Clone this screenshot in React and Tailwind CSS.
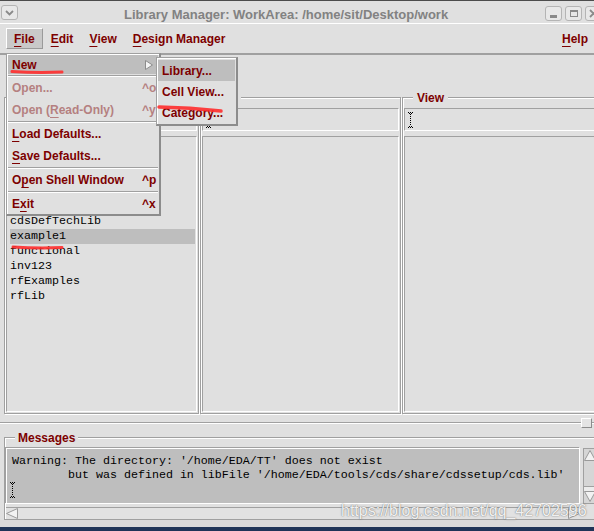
import React from 'react'

const LIBS = ['US_8ths', 'ahdlLib', 'analogLib', 'avTech', 'basic', 'cdsDefTechLib', 'example1', 'functional', 'inv123', 'rfExamples', 'rfLib']

function IBeam() {
  const dots = []
  for (let y = 2; y < 14; y += 2) dots.push(<rect key={y} x="2" y={y} width="1" height="1" />)
  return (
    <svg width="5" height="16" viewBox="0 0 5 16" fill="#000" className="block">
      <rect x="0" y="0" width="1" height="1" />
      <rect x="2" y="0" width="1" height="1" />
      <rect x="4" y="0" width="1" height="1" />
      <rect x="1" y="1" width="1" height="1" />
      <rect x="3" y="1" width="1" height="1" />
      {dots}
      <rect x="1" y="14" width="1" height="1" />
      <rect x="3" y="14" width="1" height="1" />
      <rect x="0" y="15" width="1" height="1" />
      <rect x="2" y="15" width="1" height="1" />
      <rect x="4" y="15" width="1" height="1" />
    </svg>
  )
}

function WinBtn({ children }) {
  return (
    <div className="w-[17px] h-[15px] rounded-[3px] border border-[#b4b4b4] bg-[#e8e8e8] flex items-center justify-center">
      {children}
    </div>
  )
}

function Mn({ children }) {
  return <span className="underline underline-offset-[3px] decoration-1">{children}</span>
}

function MenuRow({ children, keys, disabled }) {
  return (
    <div className={`mx-[1px] h-[22px] flex items-center pl-[4px] ${disabled ? 'text-[#b58080]' : ''}`}>
      <span>{children}</span>
      {keys && <span className="ml-auto w-[16px]">{keys}</span>}
    </div>
  )
}

function Sep() {
  return <div className="mx-[1px] h-[2px] border-t border-t-[#a0a0a0] border-b border-b-white" />
}

function Column({ className, label, cursor, rows }) {
  return (
    <div className={`${className} shrink-0 flex flex-col border border-[#a0a0a0] shadow-[inset_1px_1px_0_#fff,1px_1px_0_#fff] px-[1px] pb-[1px]`}>
      <div className="mt-[-7px] ml-[9px] px-[4px] w-fit h-[14px] leading-[14px] bg-[#e0e0e0] text-[12px] font-bold text-[#7d0000]">
        {label}
      </div>
      <div className="mt-[3px] h-[23px] border border-t-[#a0a0a0] border-l-[#a0a0a0] border-r-white border-b-white flex items-center pl-[3px]">
        {cursor && <IBeam />}
      </div>
      <div className="mt-[5px] flex-1 border border-t-[#a0a0a0] border-l-[#a0a0a0] border-r-white border-b-white pt-[2px] pl-[3px] pr-[1px] font-['Liberation_Mono','Courier_New',monospace] text-[11.66px] text-black">
        {rows && rows.map((r) => (
          <div key={r} className={`h-[15px] leading-[15px] ${r === 'example1' ? 'bg-[#bebebe]' : ''}`}>
            {r}
          </div>
        ))}
      </div>
    </div>
  )
}

export default function App() {
  return (
    <div className="relative w-[594px] h-[531px] overflow-hidden bg-[#e0e0e0] flex flex-col font-['Liberation_Sans',Arial,sans-serif]">
      {/* title bar */}
      <div className="h-[24px] shrink-0 flex items-start border-t border-t-[#4c4c4c] border-b border-b-white pl-[1px]">
        <div className="mt-[4px]">
          <WinBtn>
            <svg width="11" height="8" viewBox="0 0 11 8">
              <polyline points="2,2 5.5,5.5 9,2" fill="none" stroke="#8a8a8a" strokeWidth="1.8" />
            </svg>
          </WinBtn>
        </div>
        <span className="mt-[6px] ml-[106px] leading-[15px] text-[13px] font-bold text-[#828282] whitespace-nowrap">
          Library Manager: WorkArea: /home/sit/Desktop/work
        </span>
        <div className="ml-auto mr-[-8px] mt-[5px] flex gap-[3px] shrink-0">
          <WinBtn>
            <div className="mt-[5px] w-[7px] h-[3px] bg-[#8a8a8a]" />
          </WinBtn>
          <WinBtn>
            <div className="w-[8px] h-[7px] border border-[#8a8a8a] border-t-2" />
          </WinBtn>
          <WinBtn>
            <svg width="9" height="9" viewBox="0 0 9 9">
              <path d="M1 1 L8 8 M8 1 L1 8" stroke="#8a8a8a" strokeWidth="1.8" />
            </svg>
          </WinBtn>
        </div>
      </div>

      {/* menu bar */}
      <div className="h-[31px] shrink-0 flex items-start pt-[4px] pl-[6px] border-b-2 border-b-[#a0a0a0] text-[12px] font-bold text-[#7d0000] leading-[14px]">
        <span className="h-[21px] flex items-center px-[7px] bg-[#c9c9c9] border border-t-white border-l-white border-r-[#9a9a9a] border-b-[#9a9a9a]">
          <Mn>F</Mn>ile
        </span>
        <span className="h-[21px] flex items-center px-[8px]"><Mn>E</Mn>dit</span>
        <span className="h-[21px] flex items-center px-[8px]"><Mn>V</Mn>iew</span>
        <span className="h-[21px] flex items-center px-[8px]"><Mn>D</Mn>esign Manager</span>
        <span className="ml-auto h-[21px] flex items-center pl-[8px] pr-[6px]"><Mn>H</Mn>elp</span>
      </div>

      <div className="h-[42px] shrink-0" />

      {/* browser columns */}
      <div className="h-[317px] shrink-0 flex gap-[1px] pl-[4px]">
        <Column className="w-[195px]" label="Library" cursor rows={LIBS} />
        <Column className="w-[201px]" label="Cell" cursor />
        <Column className="w-[200px]" label="View" cursor />
      </div>

      {/* sash */}
      <div className="mt-[4px] h-[10px] shrink-0 flex items-center">
        <div className="flex-1 h-[2px] border-t border-t-[#a0a0a0] border-b border-b-white" />
        <div className="w-[11px] h-[10px] bg-[#e4e4e4] border border-t-white border-l-white border-r-[#8c8c8c] border-b-[#8c8c8c]" />
        <div className="w-[2px] h-[2px] border-t border-t-[#a0a0a0] border-b border-b-white" />
      </div>

      {/* messages */}
      <div className="mt-[9px] ml-[4px] w-[600px] h-[83px] shrink-0 flex flex-col border border-[#a0a0a0] shadow-[inset_1px_1px_0_#fff] px-[1px]">
        <div className="mt-[-7px] ml-[9px] px-[3px] w-fit h-[14px] leading-[14px] bg-[#e0e0e0] text-[12px] font-bold text-[#7d0000]">
          Messages
        </div>
        <div className="mt-[3px] flex">
          <div className="w-[574px] h-[56px] bg-[#bebebe] border border-white shadow-[-1px_-1px_0_#a0a0a0] pl-[5px] pt-[5px] font-['Liberation_Mono','Courier_New',monospace] text-[11.66px] leading-[14px] text-black whitespace-pre">
            <div>Warning: The directory: '/home/EDA/TT' does not exist</div>
            <div>{"        but was defined in libFile '/home/EDA/tools/cds/share/cdssetup/cds.lib'"}</div>
            <div className="ml-[-2px]"><IBeam /></div>
          </div>
          <div className="ml-[3px] w-[14px] h-[56px] border border-[#a0a0a0] bg-[#d6d6d6] flex flex-col items-center">
            <svg width="12" height="11" viewBox="0 0 12 11" className="mt-[1px]">
              <polygon points="6,0.5 11.5,10.5 0.5,10.5" fill="#f2f2f2" stroke="#9a9a9a" />
            </svg>
            <div className="mt-auto w-full h-[1px] bg-[#a0a0a0]" />
            <div className="w-full h-[4px] bg-[#ececec]" />
            <svg width="12" height="11" viewBox="0 0 12 11" className="mb-[1px]">
              <polygon points="0.5,0.5 11.5,0.5 6,10.5" fill="#f2f2f2" stroke="#9a9a9a" />
            </svg>
          </div>
        </div>
        <div className="mt-[3px] w-[574px] h-[12px] border-t border-t-[#a0a0a0] bg-[#e2e2e2] flex items-center justify-between">
          <svg width="12" height="11" viewBox="0 0 12 11">
            <polygon points="0.5,5.5 11.5,0.5 11.5,10.5" fill="#f2f2f2" stroke="#9a9a9a" />
          </svg>
          <svg width="12" height="11" viewBox="0 0 12 11">
            <polygon points="11.5,5.5 0.5,0.5 0.5,10.5" fill="#f2f2f2" stroke="#9a9a9a" />
          </svg>
        </div>
      </div>

      <div className="h-[7px] shrink-0 bg-[#d9d9d9]" />
      <div className="h-[4px] shrink-0 bg-[#1f3457]" />

      {/* File menu */}
      <div className="absolute left-[6px] top-[53px] w-[155px] flex flex-col bg-[#e0e0e0] border border-[#a0a0a0] border-r-2 border-b-2 border-r-[#8c8c8c] border-b-[#8c8c8c] shadow-[inset_1px_1px_0_#fff] text-[12px] font-bold text-[#7d0000] leading-[14px]">
        <div className="mx-[1px] mt-[1px] h-[19px] bg-[#bebebe] flex items-center pl-[4px] pr-[5px]">
          <span>New</span>
          <svg width="8" height="10" viewBox="0 0 8 10" className="ml-auto">
            <polygon points="0.5,0.5 7.5,5 0.5,9.5" fill="#f4f4f4" stroke="#8c8c8c" />
          </svg>
        </div>
        <div className="mt-[1px]"><Sep /></div>
        <MenuRow disabled keys="^o">Open...</MenuRow>
        <MenuRow disabled keys="^y">Open (<Mn>R</Mn>ead-Only)</MenuRow>
        <Sep />
        <MenuRow><Mn>L</Mn>oad Defaults...</MenuRow>
        <MenuRow><Mn>S</Mn>ave Defaults...</MenuRow>
        <Sep />
        <MenuRow keys="^p">O<Mn>p</Mn>en Shell Window</MenuRow>
        <Sep />
        <div className="mx-[1px] h-[21px] flex items-center pl-[4px]">
          <span>E<Mn>x</Mn>it</span>
          <span className="ml-auto w-[16px]">^x</span>
        </div>
      </div>

      {/* New submenu */}
      <div className="absolute left-[156px] top-[57px] w-[82px] flex flex-col bg-[#e0e0e0] border border-[#a0a0a0] border-r-2 border-b-2 border-r-[#8c8c8c] border-b-[#8c8c8c] shadow-[inset_1px_1px_0_#fff] pt-[2px] pb-[1px] text-[12px] font-bold text-[#7d0000] leading-[14px]">
        <div className="mx-[1px] h-[21px] bg-[#bebebe] flex items-center pl-[4px]">Library...</div>
        <div className="mx-[1px] h-[21px] flex items-center pl-[4px]">Cell View...</div>
        <div className="mx-[1px] h-[21px] flex items-center pl-[4px]">Category...</div>
      </div>

      {/* red pen marks */}
      <svg className="absolute left-0 top-0 pointer-events-none" width="594" height="531" viewBox="0 0 594 531">
        <path d="M12 71.5 Q37 73 62 72" fill="none" stroke="#ff2d2d" strokeOpacity="0.9" strokeWidth="3" strokeLinecap="round" />
        <path d="M159 107 Q190 107.5 221 111" fill="none" stroke="#ff2d2d" strokeOpacity="0.9" strokeWidth="3.5" strokeLinecap="round" />
        <path d="M13 247 Q38 248.5 62 247.5" fill="none" stroke="#ff2d2d" strokeOpacity="0.9" strokeWidth="3" strokeLinecap="round" />
      </svg>

      {/* watermark */}
      <div className="absolute left-[341px] top-[502px] text-[16px] leading-[18px] text-white/90 [text-shadow:0_0_1px_rgba(90,90,90,0.9),0_0_2px_rgba(120,120,120,0.5)] pointer-events-none whitespace-nowrap">
        https://blog.csdn.net/qq_42702596
      </div>
    </div>
  )
}
